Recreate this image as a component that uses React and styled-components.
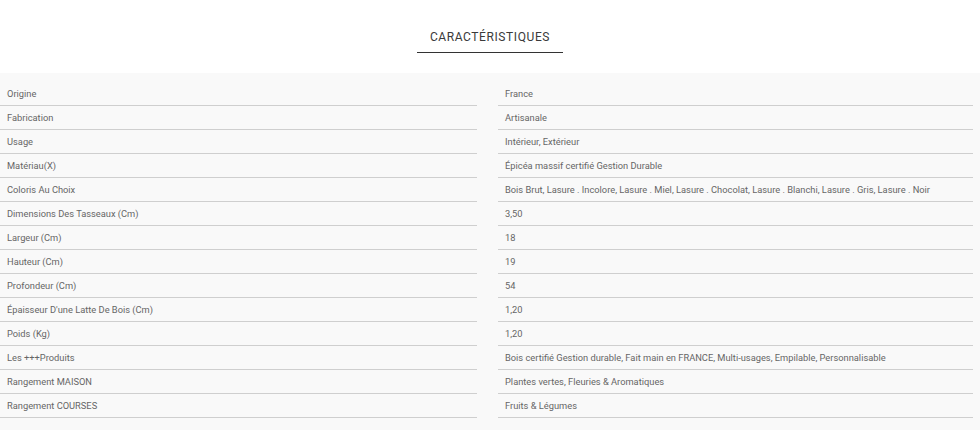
import React from 'react';
import styled, { createGlobalStyle } from 'styled-components';

const GlobalStyle = createGlobalStyle`
  body {
    margin: 0;
    background: #fff;
    font-family: Roboto, "Liberation Sans", sans-serif;
  }
`;

const Section = styled.section`
  width: 980px;
  height: 430px;
  overflow: hidden;
`;

const Header = styled.div`
  display: flex;
  justify-content: center;
  align-items: flex-start;
  padding-top: 29px;
  height: 73px;
  box-sizing: border-box;
`;

const Title = styled.h2`
  margin: 0;
  padding: 0 13px 7px;
  height: 24px;
  box-sizing: border-box;
  font-size: 12px;
  font-weight: 400;
  letter-spacing: 0.6px;
  color: #3a3a3a;
  border-bottom: 1px solid #333;
  line-height: 16px;
`;

const Panel = styled.div`
  background: #f9f9f9;
  padding-top: 9px;
  min-height: 400px;
`;

const Row = styled.div`
  display: grid;
  grid-template-columns: 477px 475px;
  column-gap: 21px;
`;

const Cell = styled.div`
  height: 23px;
  line-height: 23px;
  border-bottom: 1px solid #cfcfcf;
  font-size: 9.3px;
  color: #666;
  padding-left: 7px;
  white-space: nowrap;
`;

const rows = [
  ['Origine', 'France'],
  ['Fabrication', 'Artisanale'],
  ['Usage', 'Intérieur, Extérieur'],
  ['Matériau(X)', 'Épicéa massif certifié Gestion Durable'],
  ['Coloris Au Choix', 'Bois Brut, Lasure . Incolore, Lasure . Miel, Lasure . Chocolat, Lasure . Blanchi, Lasure . Gris, Lasure . Noir'],
  ['Dimensions Des Tasseaux (Cm)', '3,50'],
  ['Largeur (Cm)', '18'],
  ['Hauteur (Cm)', '19'],
  ['Profondeur (Cm)', '54'],
  ["Épaisseur D'une Latte De Bois (Cm)", '1,20'],
  ['Poids (Kg)', '1,20'],
  ['Les +++Produits', 'Bois certifié Gestion durable, Fait main en FRANCE, Multi-usages, Empilable, Personnalisable'],
  ['Rangement MAISON', 'Plantes vertes, Fleuries & Aromatiques'],
  ['Rangement COURSES', 'Fruits & Légumes'],
];

export default function App() {
  return (
    <>
      <GlobalStyle />
      <Section>
        <Header>
          <Title>CARACTÉRISTIQUES</Title>
        </Header>
        <Panel>
          {rows.map(([label, value]) => (
            <Row key={label}>
              <Cell>{label}</Cell>
              <Cell>{value}</Cell>
            </Row>
          ))}
        </Panel>
      </Section>
    </>
  );
}
